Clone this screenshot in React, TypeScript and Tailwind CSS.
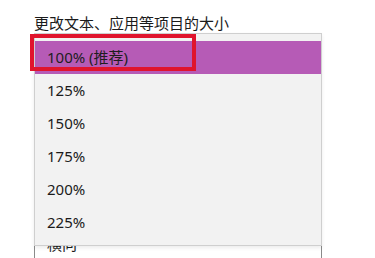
import React from "react";

const items = ["100% (推荐)", "125%", "150%", "175%", "200%", "225%"];

export default function App() {
  return (
    <div
      className="relative h-[258px] w-[375px] overflow-hidden bg-white text-[#1b1b1b]"
      style={{ fontFamily: '"Noto Sans", "Noto Sans CJK SC", sans-serif' }}
    >
      <div className="pl-[34px] pt-[13px]">
        <div className="text-[15px] leading-[20px]">更改文本、应用等项目的大小</div>
        <div className="mt-[195px] flex h-[32px] w-[288px] items-center justify-between border border-[#8a8a8a] bg-white pl-[12px] pr-[10px]">
          <span className="text-[15px] leading-[20px]">横向</span>
          <svg width="12" height="8" viewBox="0 0 12 8" className="mt-[-4px]">
            <path d="M1 1.5 L6 6 L11 1.5" fill="none" stroke="#777" strokeWidth="1.2" />
          </svg>
        </div>
      </div>

      <div className="absolute left-[34px] top-[33px] h-[213px] w-[288px] border border-[#cfcfcf] bg-[#f2f2f2] pb-[6px] pt-[7px] shadow-[0_2px_4px_rgba(0,0,0,0.08)]">
        {items.map((t, i) => (
          <div
            key={t}
            className={
              i === 0
                ? "flex h-[33px] items-center bg-[#b65bb6] pl-[12px] text-[15px] text-[#1e1e1e]"
                : "flex h-[33px] items-center pl-[12px] text-[15px]"
            }
          >
            {t}
          </div>
        ))}
      </div>

      <div className="absolute left-[30px] top-[34px] h-[37px] w-[166px] border-[4px] border-[#e0142d]" />
    </div>
  );
}
